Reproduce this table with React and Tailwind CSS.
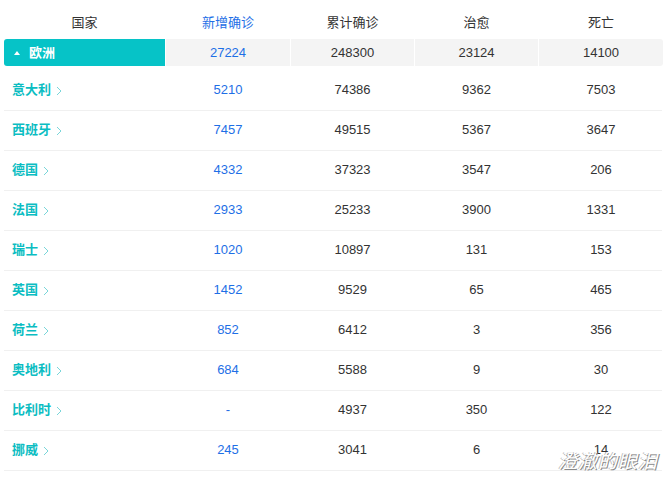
import React from 'react';

const rows = [
    ['意大利', '5210', '74386', '9362', '7503'],
    ['西班牙', '7457', '49515', '5367', '3647'],
    ['德国', '4332', '37323', '3547', '206'],
    ['法国', '2933', '25233', '3900', '1331'],
    ['瑞士', '1020', '10897', '131', '153'],
    ['英国', '1452', '9529', '65', '465'],
    ['荷兰', '852', '6412', '3', '356'],
    ['奥地利', '684', '5588', '9', '30'],
    ['比利时', '-', '4937', '350', '122'],
    ['挪威', '245', '3041', '6', '14'],
];

const cols = 'grid grid-cols-[161px_124px_123px_123px_124px] gap-x-px';

function Chevron() {
    return (
        <svg width="6" height="10" viewBox="0 0 6 10" className="ml-[5px] mt-[2px]">
            <path d="M1 1l4 4-4 4" fill="none" stroke="#7ad6d9" strokeWidth="1" />
        </svg>
    );
}

export default function App() {
    return (
        <div className="relative w-[666px] h-[481px] bg-white px-[4px] overflow-hidden text-[13px] text-[#333] font-['Liberation_Sans','Noto_Sans_CJK_SC',sans-serif]">
            {/* header */}
            <div className={`${cols} h-[39px] items-center pt-[6px]`}>
                <div className="text-center">国家</div>
                <div className="text-center text-[#1e6fe6]">新增确诊</div>
                <div className="text-center">累计确诊</div>
                <div className="text-center">治愈</div>
                <div className="text-center">死亡</div>
            </div>

            {/* continent row */}
            <div className={`${cols} h-[27px]`}>
                <div className="flex items-center bg-[#06c3c7] rounded-l-[3px] pl-[10px] text-white font-bold">
                    <span className="w-0 h-0 border-x-[3.5px] border-x-transparent border-b-[4px] border-b-white mr-[9px]"></span>
                    欧洲
                </div>
                <div className="flex items-center justify-center bg-[#f4f4f4] text-[#1e6fe6]">27224</div>
                <div className="flex items-center justify-center bg-[#f4f4f4]">248300</div>
                <div className="flex items-center justify-center bg-[#f4f4f4]">23124</div>
                <div className="flex items-center justify-center bg-[#f4f4f4] rounded-r-[3px]">14100</div>
            </div>

            <div className="mt-[5px]">
                {rows.map(([name, add, total, heal, dead]) => (
                    <div key={name} className={`${cols} h-[40px] items-center pb-[2px] border-b border-[#f0f0f0]`}>
                        <div className="flex items-center pl-[8px] text-[#0bbdc2] font-bold">
                            {name}
                            <Chevron />
                        </div>
                        <div className="text-center text-[#1e6fe6]">{add}</div>
                        <div className="text-center">{total}</div>
                        <div className="text-center">{heal}</div>
                        <div className="text-center">{dead}</div>
                    </div>
                ))}
            </div>

            {/* watermark */}
            <div className="absolute right-[8px] bottom-[8px] text-[19px] leading-[22px] italic text-white tracking-[1px] [text-shadow:1px_1px_0_#8a8a8a,-1px_0_0_#bdbdbd]">
                澄澈的眼泪
            </div>
        </div>
    );
}
